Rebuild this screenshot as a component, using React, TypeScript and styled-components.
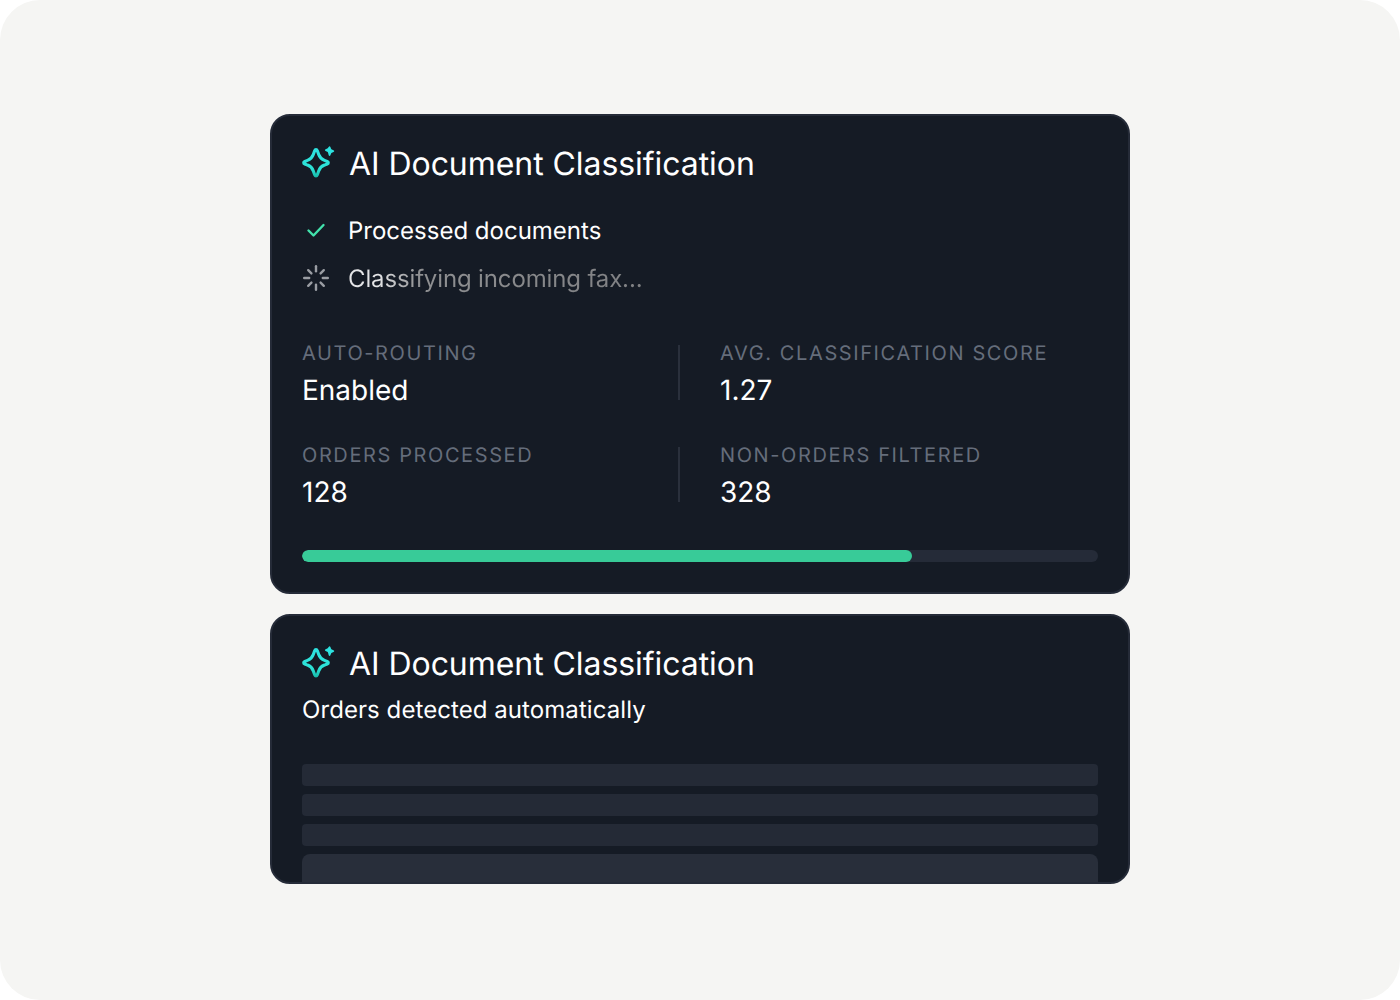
import React from 'react';
import styled, { createGlobalStyle } from 'styled-components';

const GlobalStyle = createGlobalStyle`
  html, body {
    margin: 0;
    padding: 0;
    background: #ffffff;
  }
  * {
    box-sizing: border-box;
  }
`;

const Page = styled.div`
  width: 1400px;
  height: 1000px;
  padding-top: 114px;
  display: flex;
  flex-direction: column;
  align-items: center;
  gap: 20px;
  background: #f5f5f3;
  border-radius: 40px;
  font-family: Inter, "Liberation Sans", sans-serif;
  text-rendering: geometricPrecision;
  overflow: hidden;
`;

const Card = styled.section<{ $height: number }>`
  width: 860px;
  height: ${(p) => p.$height}px;
  padding: 30px 30px 0;
  background: #151b25;
  border: 2px solid #252b38;
  border-radius: 20px;
  overflow: hidden;
`;

const Header = styled.div`
  height: 36px;
  display: flex;
  align-items: center;
  gap: 14px;
`;

const Title = styled.h2`
  margin: 0;
  font-size: 32px;
  line-height: 36px;
  font-weight: 380;
  letter-spacing: -0.06px;
  color: #ffffff;
`;

const Steps = styled.ul`
  list-style: none;
  margin: 31px 0 0;
  padding: 0;
  display: flex;
  flex-direction: column;
  gap: 12px;
`;

const Step = styled.li`
  height: 36px;
  display: flex;
  align-items: center;
  gap: 18px;
`;

const StepIcon = styled.span`
  width: 28px;
  height: 28px;
  display: flex;
  align-items: center;
  justify-content: center;
`;

const StepText = styled.span`
  font-size: 24px;
  line-height: 36px;
  font-weight: 380;
  color: #ffffff;
`;

const ShimmerText = styled(StepText)`
  letter-spacing: -0.14px;
  background: linear-gradient(90deg, #e4e5e7 0, #e4e5e7 30px, #8f9092 70px, #7f8083 100%);
  -webkit-background-clip: text;
  background-clip: text;
  color: transparent;
`;

const Stats = styled.div`
  margin-top: 40px;
  display: grid;
  grid-template-columns: 376px 1fr;
  row-gap: 30px;
`;

const Stat = styled.div<{ $divided?: boolean }>`
  height: 72px;
  ${(p) =>
    p.$divided &&
    `
    padding-left: 40px;
    border-left: 2px solid #2a303c;
    height: 55px;
    margin-top: 8px;
  `}
`;

const StatInner = styled.div<{ $divided?: boolean }>`
  margin-top: ${(p) => (p.$divided ? '-8px' : '0')};
`;

const StatLabel = styled.div`
  font-size: 20px;
  line-height: 32px;
  letter-spacing: 1.6px;
  color: #656d7b;
`;

const StatValue = styled.div`
  margin-top: 1px;
  font-size: 28px;
  line-height: 40px;
  font-weight: 380;
  color: #ffffff;
`;

const Track = styled.div`
  margin-top: 39px;
  height: 12px;
  border-radius: 6px;
  background: #252b38;
  overflow: hidden;
`;

const Fill = styled.div`
  height: 100%;
  border-radius: 6px;
  background: #38cb98;
`;

const Subtitle = styled.p`
  margin: 10px 0 0;
  font-size: 24px;
  line-height: 36px;
  font-weight: 380;
  letter-spacing: 0.07px;
  color: #ffffff;
`;

const Rows = styled.div`
  margin-top: 36px;
  display: flex;
  flex-direction: column;
  gap: 8px;
`;

const Row = styled.div<{ $tall?: boolean }>`
  height: ${(p) => (p.$tall ? 60 : 22)}px;
  border-radius: ${(p) => (p.$tall ? 8 : 4)}px;
  background: ${(p) => (p.$tall ? '#282e3a' : '#242a36')};
`;

const SparkleIcon = ({ id }: { id: string }) => (
  <svg width="33" height="36" viewBox="0 0 33 36" fill="none" aria-hidden="true">
    <defs>
      <linearGradient id={id} x1="14" y1="4" x2="14" y2="32" gradientUnits="userSpaceOnUse">
        <stop offset="0" stopColor="#2de2e0" />
        <stop offset="0.7" stopColor="#2de2d6" />
        <stop offset="1" stopColor="#14b8a6" />
      </linearGradient>
    </defs>
    <path
      transform="translate(14 17) scale(1.04) translate(-14 -18)"
      d="M12.7 6.2c.6-1.6 2-1.6 2.6 0l1.3 3.7c1 2.8 2.8 4.6 5.6 5.6l2.5 1c1.5.6 1.5 1.9 0 2.5l-2.5 1c-2.8 1-4.6 2.8-5.6 5.6l-1.3 3.7c-.6 1.6-2 1.6-2.6 0l-1.3-3.7c-1-2.8-2.8-4.6-5.6-5.6l-2.5-1c-1.5-.6-1.5-1.9 0-2.5l2.5-1c2.8-1 4.6-2.8 5.6-5.6z"
      stroke={`url(#${id})`}
      strokeWidth="3"
      strokeLinejoin="round"
    />
    <path
      d="M26.7 1c.4-1 1.3-1 1.7 0l.7 1.8c.2.4.4.6.8.8l1.6.7c1 .4 1 1.3 0 1.7l-1.6.7c-.4.2-.6.4-.8.8l-.7 1.8c-.4 1-1.3 1-1.7 0L26 6.5c-.2-.4-.4-.6-.8-.8l-1.6-.7c-1-.4-1-1.3 0-1.7l1.6-.7c.4-.2.6-.4.8-.8z"
      fill="#2de2e0"
    />
  </svg>
);

const CheckIcon = () => (
  <svg width="28" height="28" viewBox="0 0 28 28" fill="none" aria-hidden="true">
    <path
      d="M6.5 13.5l5 5L21.5 8"
      stroke="#42e2ac"
      strokeWidth="2.4"
      strokeLinecap="round"
      strokeLinejoin="round"
    />
  </svg>
);

const SpinnerIcon = () => (
  <svg width="28" height="28" viewBox="0 0 28 28" fill="none" aria-hidden="true">
    <g stroke="#9a9da3" strokeWidth="2.4" strokeLinecap="round" transform="translate(0 -1)">
      <path d="M14 2.2v5" />
      <path d="M14 20.8v5" />
      <path d="M2.2 14h5" />
      <path d="M20.8 14h5" />
      <path d="M6.2 6.2l3.2 3.2" />
      <path d="M18.6 18.6l3.2 3.2" />
      <path d="M6.2 21.8l3.2-3.2" />
      <path d="M18.6 9.4l3.2-3.2" />
    </g>
  </svg>
);

const stats = [
  { label: 'AUTO-ROUTING', value: 'Enabled' },
  { label: 'AVG. CLASSIFICATION SCORE', value: '1.27', divided: true },
  { label: 'ORDERS PROCESSED', value: '128' },
  { label: 'NON-ORDERS FILTERED', value: '328', divided: true },
];

const App: React.FC = () => (
  <>
    <GlobalStyle />
    <Page>
      <Card $height={480}>
        <Header>
          <SparkleIcon id="sparkle-a" />
          <Title>AI Document Classification</Title>
        </Header>
        <Steps>
          <Step>
            <StepIcon>
              <CheckIcon />
            </StepIcon>
            <StepText>Processed documents</StepText>
          </Step>
          <Step>
            <StepIcon>
              <SpinnerIcon />
            </StepIcon>
            <ShimmerText>Classifying incoming fax...</ShimmerText>
          </Step>
        </Steps>
        <Stats>
          {stats.map((s) => (
            <Stat key={s.label} $divided={s.divided}>
              <StatInner $divided={s.divided}>
                <StatLabel>{s.label}</StatLabel>
                <StatValue>{s.value}</StatValue>
              </StatInner>
            </Stat>
          ))}
        </Stats>
        <Track>
          <Fill style={{ width: `${(610 / 796) * 100}%` }} />
        </Track>
      </Card>
      <Card $height={270}>
        <Header>
          <SparkleIcon id="sparkle-b" />
          <Title>AI Document Classification</Title>
        </Header>
        <Subtitle>Orders detected automatically</Subtitle>
        <Rows>
          <Row />
          <Row />
          <Row />
          <Row $tall />
        </Rows>
      </Card>
    </Page>
  </>
);

export default App;
